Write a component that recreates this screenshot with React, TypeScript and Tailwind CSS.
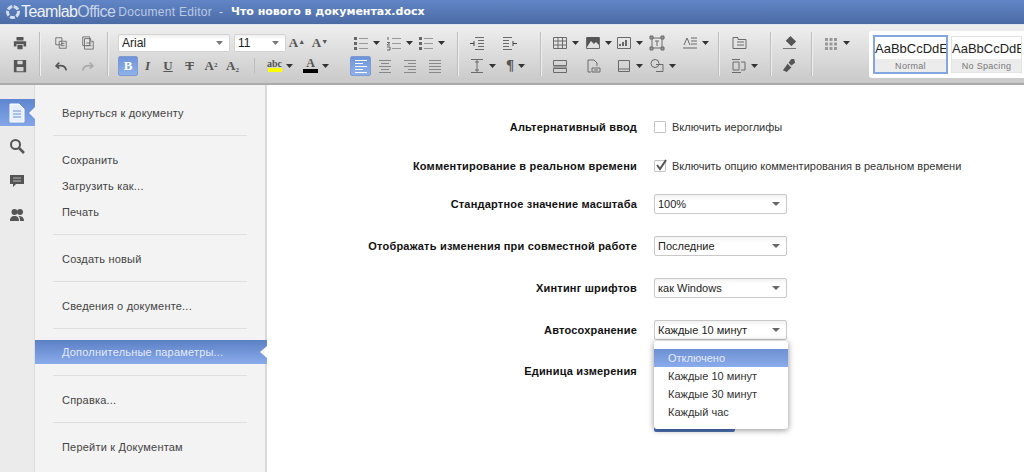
import type { ReactNode } from 'react'

const FONT = "font-['Liberation_Sans',Arial,sans-serif]"

const Caret = () => (
  <svg width="7" height="4" viewBox="0 0 7 4" className="shrink-0">
    <path d="M0 0h7L3.5 4z" fill="#333" />
  </svg>
)

// one toolbar glyph, stroke based unless fill is set
const G = ({ children, fill = false, size = 16 }: { children: ReactNode; fill?: boolean; size?: number }) => (
  <svg
    width={size}
    height={size}
    viewBox="0 0 16 16"
    fill={fill ? '#555' : 'none'}
    stroke={fill ? 'none' : '#6a6a6a'}
    strokeWidth="1"
    className="shrink-0"
  >
    {children}
  </svg>
)

const Cell = ({ w, start, children }: { w: string; start?: boolean; children?: ReactNode }) => (
  <div className={`${w} h-[20px] flex items-center ${start ? 'justify-start' : 'justify-center'} gap-[4px] shrink-0`}>
    {children}
  </div>
)

const Sep = () => <div className="w-px h-[44px] bg-[#bdbdbd] border-r border-[#efefef] box-content shrink-0" />

const Lines = ({ a, white }: { a: 'l' | 'c' | 'r' | 'j'; white?: boolean }) => {
  const c = white ? '#fff' : '#888'
  const s = (short: boolean) => {
    if (!short || a === 'j') return 'M2 0H14'
    if (a === 'l') return 'M2 0H10'
    if (a === 'c') return 'M4 0H12'
    return 'M6 0H14'
  }
  return (
    <svg width="16" height="16" viewBox="0 0 16 16" stroke={c} className="shrink-0">
      {[2.5, 5.5, 8.5, 11.5, 14.5].map((y, i) => (
        <path key={y} d={s(i % 2 === 1)} transform={`translate(0 ${y})`} />
      ))}
    </svg>
  )
}

const ListIcon = ({ nums }: { nums?: boolean }) => (
  <G>
    <path d="M6 3.500h9M6 8.500h9M6 13.500h9" stroke="#999" />
    {nums ? (
      <path d="M2 2v3M1 7.500h3l-3 2.500h3M1 12h3v3H1" stroke="#666" />
    ) : (
      <path d="M1 2h3v3H1zM1 7h3v3H1zM1 12h3v3H1z" fill="#666" stroke="none" />
    )}
  </G>
)

const Letter = ({ t, cls = 'text-[#555]' }: { t: ReactNode; cls?: string }) => (
  <span className={`font-['Liberation_Serif',serif] font-bold text-[13px] leading-none ${cls}`}>{t}</span>
)

const Combo = ({ w, text }: { w: string; text: string }) => (
  <div className={`${w} h-[18px] bg-gradient-to-b from-[#f0f0f0] to-white to-30% border border-[#d4d4d4] rounded-[2px] flex items-center justify-between pl-[3px] pr-[6px] text-[12px] text-[#222] shrink-0`}>
    {text}
    <svg width="7" height="4" viewBox="0 0 7 4"><path d="M0 0h7L3.5 4z" fill="#777" /></svg>
  </div>
)

const BLUE_BTN = 'bg-gradient-to-b from-[#6e94d8] to-[#8fb0ea] rounded-[2px] border border-[#7d9bd0]'

const Toolbar = () => (
  <div className="h-[60px] flex items-center bg-gradient-to-b from-[#efefef] to-[#c9c9c9] border-b-2 border-[#ababab] shrink-0">
    <div className="w-[39px] pl-[11px] flex flex-col gap-[3px] shrink-0">
      <Cell w="w-[18px]">
        <G fill size={14}><path d="M4 1h8v4H4zM1 6h14v6h-3V9H4v3H1zM5 10h6v5H5z" /></G>
      </Cell>
      <Cell w="w-[18px]">
        <G fill size={14}><path d="M1 1h14v14H1zM5 2v4h6V2zM4 9v5h8V9z" fillRule="evenodd" /></G>
      </Cell>
    </div>
    <Sep />
    <div className="flex flex-col gap-[3px] w-[66px] pl-[6px] shrink-0">
      <div className="flex">
        <Cell w="w-[27px]"><G size={14}><path d="M2 2h7v8H2zM6 6h8v8H6zM8 8.500h4M8 11h4" /></G></Cell>
        <Cell w="w-[27px]"><G size={14}><path d="M4 3h7v3h3v9H4zM2 1h8v10H2z" /><path d="M6 8h6M6 11h6" /></G></Cell>
      </div>
      <div className="flex">
        <Cell w="w-[27px]"><G size={14}><path d="M14 13c-1-5-5-6-10-5M6 4L2.500 8 6 11" strokeWidth="2" stroke="#555" /></G></Cell>
        <Cell w="w-[27px]"><G size={14}><path d="M2 13c1-5 5-6 10-5M10 4l3.500 4L10 11" strokeWidth="2" stroke="#aaa" /></G></Cell>
      </div>
    </div>
    <Sep />
    <div className="flex flex-col gap-[3px] ml-[9px] w-[231px] shrink-0">
      <div className="flex items-center">
        <Combo w="w-[112px]" text="Arial" />
        <div className="w-[4px]" />
        <Combo w="w-[52px]" text="11" />
        <Cell w="w-[22px]"><Letter t={<>A<sup className="text-[7px]">▲</sup></>} /></Cell>
        <Cell w="w-[24px]"><Letter t={<>A<sup className="text-[7px]">▼</sup></>} /></Cell>
      </div>
      <div className="flex items-center">
        <Cell w={`w-[20px] ${BLUE_BTN}`}><Letter t="B" cls="text-white" /></Cell>
        <Cell w="w-[19px]"><Letter t="I" cls="italic text-[#555]" /></Cell>
        <Cell w="w-[22px]"><Letter t="U" cls="underline text-[#555]" /></Cell>
        <Cell w="w-[21px]"><Letter t="T" cls="line-through text-[#555]" /></Cell>
        <Cell w="w-[22px]"><Letter t={<>A<sup className="text-[7px]">2</sup></>} /></Cell>
        <Cell w="w-[21px]"><Letter t={<>A<sub className="text-[7px]">2</sub></>} /></Cell>
        <div className="w-[11px]" />
        <div className="w-px h-[16px] bg-[#bdbdbd]" />
        <div className="w-[10px]" />
        <Cell w="w-[30px]">
          <span className="flex flex-col items-center font-['Liberation_Serif',serif] font-bold text-[10px] leading-[9px] text-[#555]">abc<span className="w-[14px] h-[4px] bg-[#ffff00]" /></span>
          <Caret />
        </Cell>
        <div className="w-[6px]" />
        <Cell w="w-[30px]">
          <span className="flex flex-col items-center font-['Liberation_Serif',serif] font-bold text-[12px] leading-[11px] text-[#555]">A<span className="w-[15px] h-[4px] bg-black" /></span>
          <Caret />
        </Cell>
      </div>
    </div>
    <div className="flex flex-col gap-[3px] w-[108px] shrink-0">
      <div className="flex">
        <Cell w="w-[34px]"><ListIcon /><Caret /></Cell>
        <Cell w="w-[32px]"><ListIcon nums /><Caret /></Cell>
        <Cell w="w-[32px]"><ListIcon /><Caret /></Cell>
      </div>
      <div className="flex pl-[1px]">
        <Cell w={`w-[21px] ${BLUE_BTN}`}><Lines a="l" white /></Cell>
        <Cell w="w-[28px]"><Lines a="c" /></Cell>
        <Cell w="w-[22px]"><Lines a="r" /></Cell>
        <Cell w="w-[28px]"><Lines a="j" /></Cell>
      </div>
    </div>
    <Sep />
    <div className="flex flex-col gap-[3px] w-[81px] shrink-0">
      <div className="flex">
        <Cell w="w-[36px]"><G><path d="M6 2.500h9M9 5.500h6M9 8.500h6M9 11.500h6M6 14.500h9" /><path d="M1 8.500h4M5 6v5" stroke="#444" /></G></Cell>
        <Cell w="w-[30px]"><G><path d="M1 2.500h9M1 5.500h6M1 8.500h6M1 11.500h6M1 14.500h9" /><path d="M11 8.500h4M11 6v5" stroke="#444" /></G></Cell>
      </div>
      <div className="flex">
        <Cell w="w-[36px] pl-[10px]" start><G><path d="M2 1.500h12M2 14.500h12M8 2v12M6 4h4M6 12h4" /></G><Caret /></Cell>
        <Cell w="w-[30px] pl-[11px]" start><span className="font-['Liberation_Serif',serif] font-bold text-[15px] leading-none text-[#555]">¶</span><Caret /></Cell>
      </div>
    </div>
    <Sep />
    <div className="flex flex-col gap-[3px] w-[176px] pl-[10px] shrink-0">
      <div className="flex">
        <Cell w="w-[33px]" start><G><path d="M1.500 2.500h13v11h-13zM1.500 6h13M1.500 10h13M6 2.500v11M10.500 2.500v11" /></G><Caret /></Cell>
        <Cell w="w-[31px]" start><G><path d="M1.500 2.500h13v11h-13z" /><path d="M2 12l4-6 3 3 2-2 3 3v-8H2z" fill="#555" stroke="none" /></G><Caret /></Cell>
        <Cell w="w-[33px]" start><G><path d="M1.500 2.500h13v11h-13z" /><path d="M4 11V9M7 11V7M10 11V5" strokeWidth="2" stroke="#666" /></G><Caret /></Cell>
        <Cell w="w-[33px]" start><G><path d="M3 3h10v10H3z" /><path d="M1 1h3v3H1zM12 1h3v3h-3zM1 12h3v3H1zM12 12h3v3h-3z" fill="#999" /><path d="M6 6h4M8 6v5" /></G></Cell>
        <Cell w="w-[36px]" start><G><path d="M9 3h6M9 6h6M9 9h6M1 13h14M2 10l3-7 3 7" /></G><Caret /></Cell>
      </div>
      <div className="flex">
        <Cell w="w-[33px]" start><G><path d="M1.500 2.500h13v5h-13zM1.500 10.500h13v4h-13zM1 9h14" /></G></Cell>
        <Cell w="w-[31px]" start><G><path d="M3 14V2h6l3 3v3M3 14h3" /><path d="M7 10h8v4H7z" /><path d="M9 12h4" /></G></Cell>
        <Cell w="w-[33px]" start><G><path d="M2.500 2.500h11v11h-11zM2.500 11h11" /></G><Caret /></Cell>
        <Cell w="w-[33px]" start><G><path d="M6 1.500a4 4 0 1 0 0 8 4 4 0 1 0 0-8zM7 6.500h7v7H7" /></G><Caret /></Cell>
      </div>
    </div>
    <Sep />
    <div className="flex flex-col gap-[3px] w-[50px] pl-[11px] shrink-0">
      <Cell w="w-[20px]" start><G><path d="M2 2.500h5v2h8v9H2zM6 7h7M6 10h7" /></G></Cell>
      <Cell w="w-[32px]" start><G><path d="M1 1.500h8M1 14.500h9M2 4h6v8H2zM10 4h4v8h-4" /></G><Caret /></Cell>
    </div>
    <Sep />
    <div className="flex flex-col gap-[3px] w-[39px] pl-[10px] shrink-0">
      <Cell w="w-[20px]" start><G fill size={15}><path d="M9 1l6 6-5 5-6-6zM1 14h14v1H1z" /></G></Cell>
      <Cell w="w-[20px]" start><G fill size={15}><path d="M10 1h3l1 4-4 3-3-3zM6 6l4 4-5 5-4-2z" /></G></Cell>
    </div>
    <Sep />
    <div className="flex flex-col gap-[3px] w-[56px] pl-[10px] shrink-0">
      <Cell w="w-[34px]" start>
        <G fill><path d="M2 3h3v3H2zM6.500 3h3v3h-3zM11 3h3v3h-3zM2 7.500h3v3H2zM6.500 7.500h3v3h-3zM11 7.500h3v3h-3zM2 12h3v3H2zM6.500 12h3v3h-3zM11 12h3v3h-3z" fill="#999" /></G>
        <Caret />
      </Cell>
      <Cell w="w-[20px]" />
    </div>
    <div className="flex-1 h-[47px] bg-white rounded-l-[3px] flex items-center gap-[3px] pl-[4px] overflow-hidden">
      <div className="w-[75px] h-[39px] border-2 border-[#83a5e0] flex flex-col shrink-0 overflow-hidden">
        <div className="h-[22px] text-[13px] leading-[23px] text-[#222] whitespace-nowrap">AaBbCcDdE</div>
        <div className="flex-1 bg-[#ececec] text-[9px] leading-[14px] text-center text-[#777] tracking-[0.3px]">Normal</div>
      </div>
      <div className="w-[71px] h-[37px] border border-[#e4e4e4] flex flex-col shrink-0 overflow-hidden">
        <div className="h-[22px] text-[13px] leading-[23px] text-[#222] whitespace-nowrap">AaBbCcDdE</div>
        <div className="flex-1 bg-[#ececec] text-[9px] leading-[14px] text-center text-[#777] tracking-[0.3px]">No Spacing</div>
      </div>
    </div>
  </div>
)

const Item = ({ text, selected }: { text: string; selected?: boolean }) =>
  selected ? (
    <div className="h-[24px] -mr-[2px] flex items-center justify-between pl-[27px] text-[11px] tracking-[0.2px] text-[#e3eaf8] bg-gradient-to-b from-[#5b80c4] to-[#8bacec] shrink-0">
      {text}
      <span className="w-0 h-0 border-y-[6px] border-y-transparent border-r-[7px] border-r-[#ffffff]" />
    </div>
  ) : (
    <div className="h-[26px] flex items-center pl-[27px] text-[11px] tracking-[0.2px] text-[#444] shrink-0">{text}</div>
  )

const Div = ({ cls = 'mt-[9px] mb-[11px]' }: { cls?: string }) => (
  <div className={`h-px bg-[#e0e0e0] mx-[18px] shrink-0 ${cls}`} />
)

const Menu = () => (
  <div className="w-[232px] bg-[#f3f3f3] border-r-2 border-[#d9d9d9] pt-[15px] flex flex-col shrink-0 box-border">
    <Item text="Вернуться к документу" />
    <Div />
    <Item text="Сохранить" />
    <Item text="Загрузить как..." />
    <Item text="Печать" />
    <Div />
    <Item text="Создать новый" />
    <Div />
    <Item text="Сведения о документе..." />
    <Div />
    <Item text="Дополнительные параметры..." selected />
    <Div cls="mt-[11px] mb-[11px]" />
    <Item text="Справка..." />
    <Div />
    <Item text="Перейти к Документам" />
  </div>
)

const Rail = () => (
  <div className="w-[35px] bg-[#ebebeb] border-r border-[#dcdcdc] pt-[14px] flex flex-col items-center shrink-0 box-border">
    <div className="w-[35px] h-[27px] bg-gradient-to-b from-[#5f86cf] to-[#84a6e8] flex items-center justify-center relative shrink-0">
      <svg width="16" height="20" viewBox="0 0 16 20">
        <path d="M1 1h9l5 5v13H1z" fill="#e8effc" stroke="#fff" />
        <path d="M4 8h8M4 11h8M4 14h8" stroke="#6d90d2" />
      </svg>
      <span className="absolute right-0 top-[8px] w-0 h-0 border-y-[6px] border-y-transparent border-r-[6px] border-r-[#f3f3f3]" />
    </div>
    <svg width="16" height="16" viewBox="0 0 16 16" className="mt-[12px]">
      <circle cx="6.500" cy="6.500" r="4.500" fill="none" stroke="#555" strokeWidth="2" />
      <path d="M10 10l5 5" stroke="#555" strokeWidth="2.500" />
    </svg>
    <svg width="16" height="16" viewBox="0 0 16 16" className="mt-[19px]">
      <path d="M1 2h14v9H7l-3 3v-3H1z" fill="#555" />
      <path d="M4 5h8M4 8h8" stroke="#bbb" />
    </svg>
    <svg width="16" height="16" viewBox="0 0 16 16" className="mt-[18px]">
      <circle cx="5.500" cy="5" r="3" fill="#555" />
      <circle cx="11" cy="5" r="3" fill="#555" />
      <path d="M1 14c0-4 2-5 4.500-5s4.500 1 4.500 5zM11 14c0-3-.5-4-1.500-5 3 0 5.500 1 5.500 5z" fill="#555" />
    </svg>
  </div>
)

const Select = ({ text }: { text?: string }) => (
  <div className="w-[133px] h-[20px] bg-gradient-to-b from-[#f2f2f2] to-white to-30% border border-[#c8c8c8] rounded-[2px] flex items-center justify-between pl-[3px] pr-[6px] text-[11px] text-[#222]">
    {text}
    <svg width="8" height="4" viewBox="0 0 8 4"><path d="M0 0h8L4 4z" fill="#666" /></svg>
  </div>
)

const Row = ({ label, cls, children }: { label: string; cls: string; children?: ReactNode }) => (
  <div className={`flex items-center h-[20px] ${cls}`}>
    <div className="w-[370px] text-right text-[11px] tracking-[0.2px] font-bold text-[#111] whitespace-nowrap">{label}</div>
    <div className="ml-[17px] flex items-center">{children}</div>
  </div>
)

const Check = ({ checked, text }: { checked?: boolean; text: string }) => (
  <div className="flex items-center gap-[6px] text-[11px] text-[#333] whitespace-nowrap">
    <span className="w-[12px] h-[12px] bg-white border border-[#c4c4c4] rounded-[1px] relative">
      {checked && (
        <svg width="13" height="13" viewBox="0 0 13 13" className="absolute -top-[2px] left-0">
          <path d="M2 6l3 4 6-9" fill="none" stroke="#555" strokeWidth="2" />
        </svg>
      )}
    </span>
    {text}
  </div>
)

const Dropdown = () => (
  <div className="absolute left-0 top-[21px] w-[134px] h-[88px] bg-white rounded-[3px] shadow-[0_1px_6px_rgba(0,0,0,0.45)] pt-[8px] text-[11px] text-[#333] z-10">
    <div className="h-[18px] pl-[14px] flex items-center text-[#e3eaf8] bg-gradient-to-b from-[#6d90d2] to-[#8aabec]">Отключено</div>
    <div className="h-[18px] pl-[14px] flex items-center">Каждые 10 минут</div>
    <div className="h-[18px] pl-[14px] flex items-center">Каждые 30 минут</div>
    <div className="h-[18px] pl-[14px] flex items-center">Каждый час</div>
  </div>
)

export default function App() {
  return (
    <div className={`w-[1024px] h-[472px] flex flex-col overflow-hidden bg-white ${FONT}`}>
      {/* Title */}
      <div className="h-[25px] flex items-center bg-gradient-to-b from-[#6185c6] to-[#4b6ba5] border-b border-[#dfe6f2] pl-[5px] text-white shrink-0 whitespace-nowrap">
        <svg width="16" height="16" viewBox="0 0 16 16" className="shrink-0">
          <circle cx="8" cy="8" r="5.500" fill="none" stroke="#d5deee" strokeWidth="3" strokeDasharray="5 1.500" />
        </svg>
        <span className="text-[16px] leading-none tracking-[-0.6px] text-[#eef2f9]">Teamlab<span className="text-[#c6d3ea]">Office</span></span>
        <span className="ml-[3px] text-[12px] tracking-[0.3px] text-[#bac9e4]">Document Editor</span>
        <span className="ml-[7px] text-[12px] text-[#c6d3ea]">-</span>
        <span className="ml-[8px] text-[11px] font-bold font-['DejaVu_Sans',sans-serif]">Что нового в документах.docx</span>
      </div>
      <Toolbar />
      <div className="flex-1 flex min-h-0">
        <Rail />
        <Menu />
        <div className="flex-1 pt-[32px]">
          <Row label="Альтернативный ввод" cls="mb-[19px]"><Check text="Включить иероглифы" /></Row>
          <Row label="Комментирование в реальном времени" cls="mb-[18px]"><Check checked text="Включить опцию комментирования в реальном времени" /></Row>
          <Row label="Стандартное значение масштаба" cls="mb-[22px]"><Select text="100%" /></Row>
          <Row label="Отображать изменения при совместной работе" cls="mb-[22px]"><Select text="Последние" /></Row>
          <Row label="Хинтинг шрифтов" cls="mb-[22px]"><Select text="как Windows" /></Row>
          <Row label="Автосохранение" cls="mb-[21px]">
            <div className="relative">
              <Select text="Каждые 10 минут" />
              <Dropdown />
            </div>
          </Row>
          <Row label="Единица измерения" cls="mb-[29px]"><Select /></Row>
          <div className="ml-[387px] w-[81px] h-[22px] bg-[#4f74b8] rounded-[2px]" />
        </div>
      </div>
    </div>
  )
}
